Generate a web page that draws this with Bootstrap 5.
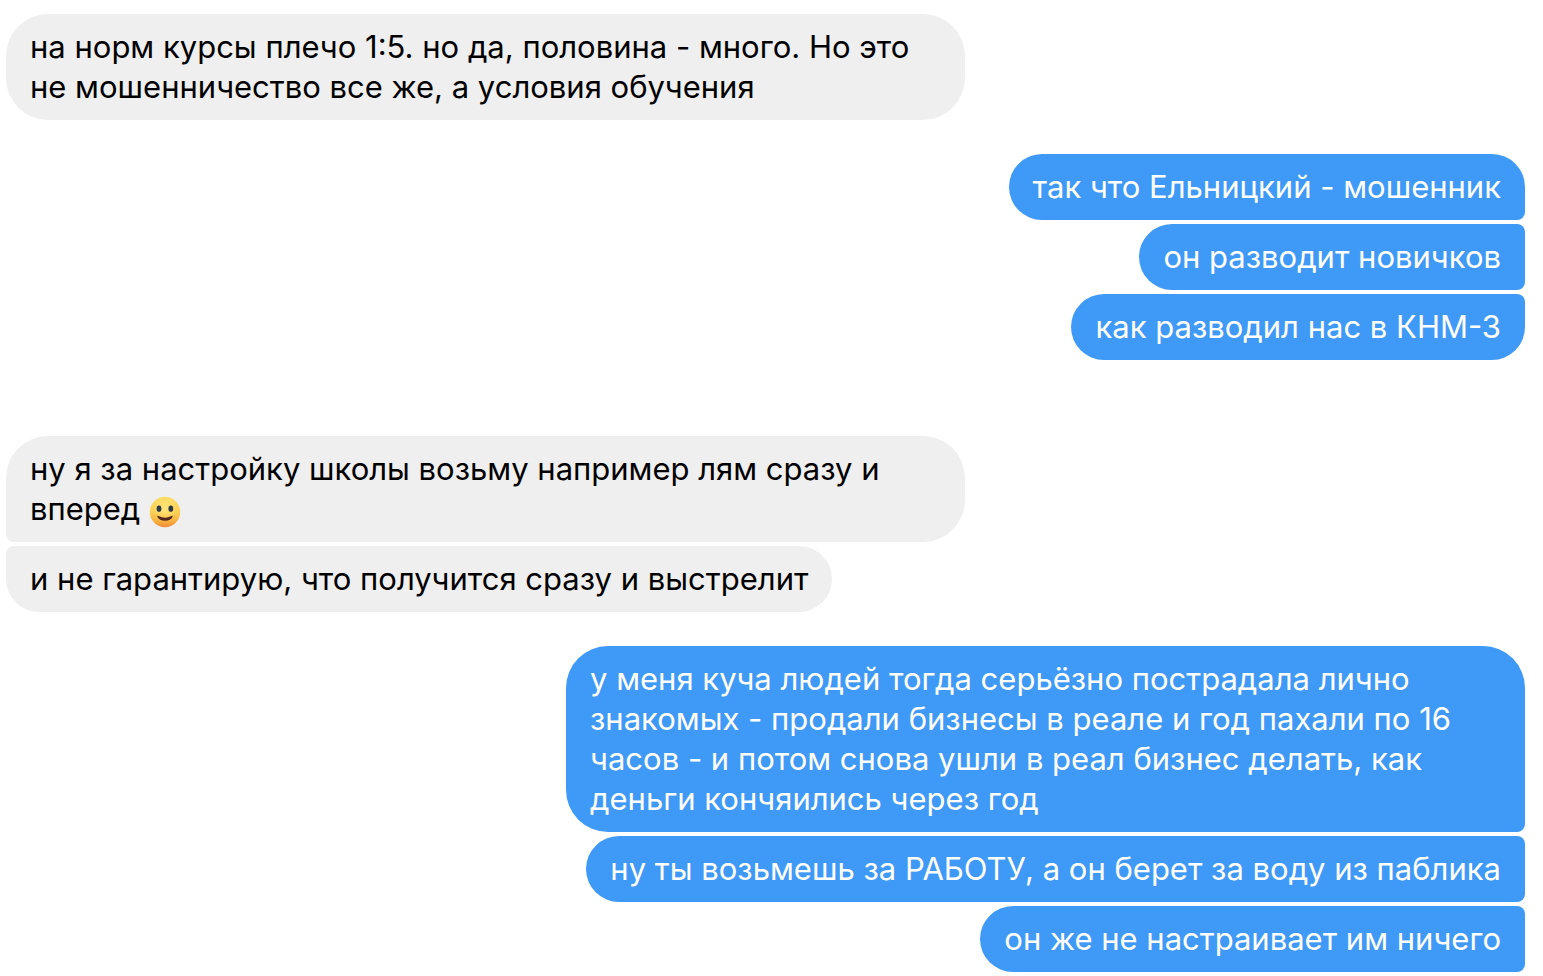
<!DOCTYPE html>
<html lang="ru">
<head>
<meta charset="utf-8">
<meta name="viewport" content="width=device-width, initial-scale=1">
<title>Чат</title>
<link href="https://cdn.jsdelivr.net/npm/bootstrap@5.3.0/dist/css/bootstrap.min.css" rel="stylesheet">
<style>
body { font-family: Inter, "Liberation Sans", sans-serif; font-size: 31px; line-height: 40px; color: #000; background: #fff; }
.chat { padding: 14px 18px 4px 6px; }
.thread { gap: 34px; }
.series { gap: 4px; }
.pause { margin-top: 42px; }
.bubble { max-width: calc(63% + 2px); padding: 13px 24px; border-radius: 33px; }
.bubble-long { border-radius: 42px; }
.incoming .bubble { background: #efefef; }
.outgoing .bubble { background: #3f99f7; color: #fff; }
.incoming .bubble:not(:last-child) { border-bottom-left-radius: 8px; }
.incoming .bubble + .bubble { border-top-left-radius: 8px; }
.outgoing .bubble:not(:last-child) { border-bottom-right-radius: 8px; }
.outgoing .bubble + .bubble { border-top-right-radius: 8px; }
.outgoing.open .bubble:last-child { border-bottom-right-radius: 8px; }
.emoji { width: 32px; height: 32px; vertical-align: -8px; }
</style>
</head>
<body>
<main class="chat container-fluid">
<div class="thread d-flex flex-column">
<section class="series incoming d-flex flex-column align-items-start">
<div class="bubble bubble-long">на норм курсы плечо 1:5. но да, половина - много. Но это не мошенничество все же, а условия обучения</div>
</section>
<section class="series outgoing d-flex flex-column align-items-end">
<div class="bubble">так что Ельницкий - мошенник</div>
<div class="bubble">он разводит новичков</div>
<div class="bubble">как разводил нас в КНМ-3</div>
</section>
<section class="series incoming pause d-flex flex-column align-items-start">
<div class="bubble bubble-long">ну я за настройку школы возьму например лям сразу и вперед <svg class="emoji" viewBox="0 0 32 32" role="img" aria-label="улыбка">
<defs>
<linearGradient id="face" x1="0" y1="0" x2="0" y2="1"><stop offset="0" stop-color="#fbe06a"/><stop offset=".5" stop-color="#fbd054"/><stop offset=".8" stop-color="#f8b040"/><stop offset="1" stop-color="#f08a35"/></linearGradient>
<radialGradient id="glow" cx=".5" cy=".45" r=".5"><stop offset="0" stop-color="#ffe57c"/><stop offset=".6" stop-color="#ffe070" stop-opacity=".5"/><stop offset="1" stop-color="#ffd35a" stop-opacity="0"/></radialGradient>
</defs>
<circle cx="16" cy="16" r="15.2" fill="url(#face)"/>
<circle cx="16" cy="14" r="13" fill="url(#glow)"/>
<ellipse cx="10" cy="12.7" rx="2.4" ry="3.1" fill="#2c3949"/>
<ellipse cx="21.8" cy="12.7" rx="2.4" ry="3.1" fill="#2c3949"/>
<path d="M8.4 20.7Q8 19.4 9.5 20.1Q16 23.3 22.5 20.1Q24 19.4 23.6 20.7Q21.7 24.7 16 24.7Q10.3 24.7 8.4 20.7Z" fill="#51271b"/>
</svg></div>
<div class="bubble">и не гарантирую, что получится сразу и выстрелит</div>
</section>
<section class="series outgoing open d-flex flex-column align-items-end">
<div class="bubble bubble-long">у меня куча людей тогда серьёзно пострадала лично знакомых - продали бизнесы в реале и год пахали по 16 часов - и потом снова ушли в реал бизнес делать, как деньги кончяились через год</div>
<div class="bubble">ну ты возьмешь за РАБОТУ, а он берет за воду из паблика</div>
<div class="bubble">он же не настраивает им ничего</div>
</section>
</div>
</main>
<script src="https://cdn.jsdelivr.net/npm/bootstrap@5.3.0/dist/js/bootstrap.bundle.min.js"></script>
</body>
</html>
